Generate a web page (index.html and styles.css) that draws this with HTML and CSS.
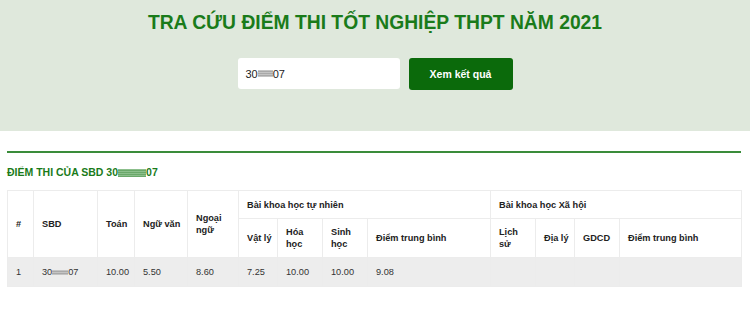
FILE: index.html
```html
<!DOCTYPE html>
<html lang="vi">
  <head>
    <meta charset="UTF-8" />
    <meta name="viewport" content="width=device-width, initial-scale=1.0" />
    <title>Tra cứu điểm thi</title>
    <link rel="stylesheet" href="styles.css">
  </head>
  <body>
    <div class="hero">
      <h1 class="title">TRA CỨU ĐIỂM THI TỐT NGHIỆP THPT NĂM 2021</h1>
      <form class="search">
        <div class="search-input">30<span class="mask"></span>07</div>
        <button type="button" class="search-btn">Xem kết quả</button>
      </form>
    </div>

    <div class="result">
      <h2 class="result-title">ĐIỂM THI CỦA SBD 30<span class="mask mask-green"></span>07</h2>
      <table class="scores">
        <colgroup>
          <col style="width: 26px" />
          <col style="width: 64px" />
          <col style="width: 37px" />
          <col style="width: 53px" />
          <col style="width: 51px" />
          <col style="width: 39px" />
          <col style="width: 45px" />
          <col style="width: 45px" />
          <col style="width: 123px" />
          <col style="width: 45px" />
          <col style="width: 39px" />
          <col style="width: 45px" />
          <col style="width: 122px" />
        </colgroup>
        <thead>
          <tr class="row-group">
            <th rowspan="2">#</th>
            <th rowspan="2">SBD</th>
            <th rowspan="2">Toán</th>
            <th rowspan="2">Ngữ văn</th>
            <th rowspan="2">Ngoại ngữ</th>
            <th colspan="4">Bài khoa học tự nhiên</th>
            <th colspan="4">Bài khoa học Xã hội</th>
          </tr>
          <tr class="row-sub">
            <th class="nowrap">Vật lý</th>
            <th>Hóa học</th>
            <th>Sinh học</th>
            <th>Điểm trung bình</th>
            <th>Lịch sử</th>
            <th class="nowrap">Địa lý</th>
            <th>GDCD</th>
            <th>Điểm trung bình</th>
          </tr>
        </thead>
        <tbody>
          <tr>
            <td>1</td>
            <td>30<span class="mask mask-small"></span>07</td>
            <td>10.00</td>
            <td>5.50</td>
            <td>8.60</td>
            <td>7.25</td>
            <td>10.00</td>
            <td>10.00</td>
            <td>9.08</td>
            <td></td>
            <td></td>
            <td></td>
            <td></td>
          </tr>
        </tbody>
      </table>
    </div>
  </body>
</html>
```

FILE: styles.css
```css
body {
  margin: 0;
  font-family: "Liberation Sans", Arial, sans-serif;
  background: #ffffff;
  color: #222;
}
.hero {
  background: #dfe8dc;
  height: 131px;
  padding-top: 10px;
  box-sizing: border-box;
  text-align: center;
}
.title {
  margin: 0;
  font-size: 19.3px;
  line-height: 26px;
  font-weight: bold;
  color: #1a7b1a;
}
.search {
  display: flex;
  justify-content: center;
  gap: 9px;
  margin-top: 22px;
}
.search-input {
  width: 162px;
  height: 31px;
  box-sizing: border-box;
  background: #fff;
  border-radius: 3px;
  padding: 0 8px;
  display: flex;
  align-items: center;
  font-size: 11px;
  color: #222;
  text-align: left;
}
.search-btn {
  width: 104px;
  height: 32px;
  background: #0b6a0b;
  color: #fff;
  border: none;
  border-radius: 3px;
  font-family: "Liberation Sans", Arial, sans-serif;
  font-weight: bold;
  font-size: 10.5px;
  cursor: pointer;
}
.mask {
  display: inline-block;
  width: 15px;
  height: 7px;
  background: repeating-linear-gradient(#c4c4c4 0 1px, #a9a9a9 1px 2px);
  vertical-align: middle;
}
.mask-green {
  width: 28px;
  height: 8px;
  background: repeating-linear-gradient(#8cbf8c 0 1px, #6aa86a 1px 2px);
}
.mask-small {
  width: 16px;
  height: 5px;
}
.result {
  padding: 0 9px 0 7px;
}
.result-title {
  margin: 20px 0 0;
  padding-top: 12px;
  border-top: 2px solid #3a8c3a;
  font-size: 10.5px;
  line-height: 14px;
  font-weight: bold;
  color: #1a7b1a;
}
.scores {
  margin-top: 11px;
  width: 734px;
  table-layout: fixed;
  border-collapse: collapse;
  font-size: 9.2px;
}
.scores th,
.scores td {
  border: 1px solid #ececec;
  padding: 0 6px 0 8px;
  text-align: left;
  vertical-align: middle;
  line-height: 12px;
}
.scores th {
  font-weight: bold;
  color: #222;
}
.scores .nowrap {
  white-space: nowrap;
  padding-right: 0;
}
.row-group th {
  height: 27px;
}
.row-sub th {
  height: 38px;
}
.scores tbody tr {
  background: #ededed;
}
.scores td {
  height: 28px;
  color: #333;
}
```
